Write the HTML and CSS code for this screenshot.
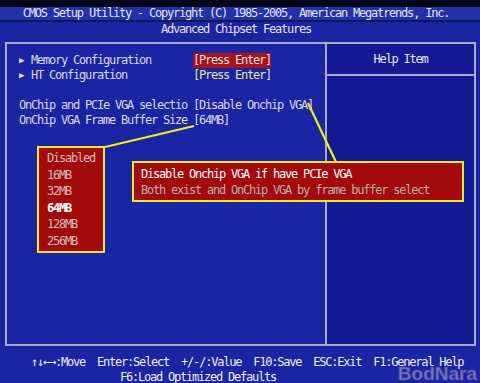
FILE: index.html
```html
<!DOCTYPE html>
<html lang="en">
<head>
    <meta charset="UTF-8">
    <meta name="viewport" content="width=device-width, initial-scale=1.0">
    <title>Advanced Chipset Features</title>
    <link rel="stylesheet" href="styles.css">
</head>
<body>
    <div class="screen">
        <div class="title-bar">CMOS Setup Utility - Copyright (C) 1985-2005, American Megatrends, Inc.</div>
        <div class="subtitle">Advanced Chipset Features</div>

        <div class="frame">
            <div class="items">
                <div class="row">
                    <span class="label"><span class="arrow">&#9654;</span>Memory Configuration</span>
                    <span class="value selected">[Press Enter]</span>
                </div>
                <div class="row">
                    <span class="label"><span class="arrow">&#9654;</span>HT Configuration</span>
                    <span class="value submenu">[Press Enter]</span>
                </div>
                <div class="row blank"></div>
                <div class="row">
                    <span class="label">OnChip and PCIe VGA selectio</span>
                    <span class="value">[Disable Onchip VGA]</span>
                </div>
                <div class="row">
                    <span class="label">OnChip VGA Frame Buffer Size</span>
                    <span class="value">[64MB]</span>
                </div>
            </div>
            <div class="help">
                <div class="help-head">Help Item</div>
            </div>
        </div>

        <div class="footer">
            <div class="keys">&#8593;&#8595;&#8592;&#8594;:Move  Enter:Select  +/-/:Value  F10:Save  ESC:Exit  F1:General Help</div>
            <div class="keys second">F6:Load Optimized Defaults</div>
        </div>

        <!-- callout lines drawn over the screen -->
        <svg class="callouts" width="480" height="383" viewBox="0 0 480 383">
            <line x1="194" y1="126" x2="105" y2="147" />
            <line x1="308" y1="103" x2="336" y2="162" />
        </svg>

        <div class="choices">
            <div>Disabled</div>
            <div>16MB</div>
            <div>32MB</div>
            <div class="current">64MB</div>
            <div>128MB</div>
            <div>256MB</div>
        </div>

        <div class="note">
            <div class="note-main">Disable Onchip VGA if have PCIe VGA</div>
            <div class="note-sub">Both exist and OnChip VGA by frame buffer select</div>
        </div>

        <div class="watermark">BodNara</div>
    </div>
</body>
</html>
```

FILE: styles.css
```css
html,
body {
    margin: 0;
    padding: 0;
    background: #1b24a3;
}

.screen {
    position: relative;
    width: 480px;
    height: 383px;
    overflow: hidden;
    font-family: "DejaVu Sans Mono", monospace;
    font-size: 12px;
    letter-spacing: -1.22px;
    color: #d8d8e6;
}

.title-bar {
    height: 13px;
    line-height: 13px;
    border-top: 7px solid #07071c;
    border-bottom: 2px solid #10175e;
    background: #2331a6;
    color: #e4e4ee;
    text-align: center;
    padding-right: 8px;
}

.subtitle {
    height: 20px;
    line-height: 14px;
    text-align: center;
    padding-right: 8px;
    color: #e2e2ec;
}

.frame {
    display: flex;
    box-sizing: border-box;
    width: 471px;
    height: 304px;
    margin-left: 5px;
    border: 2px solid #a9aacb;
}

.items {
    width: 318px;
    padding: 9px 0 0 12px;
    box-sizing: border-box;
}

.row {
    display: flex;
    height: 15px;
    line-height: 15px;
    white-space: nowrap;
}

.label {
    width: 174px;
    flex: none;
}

.arrow {
    display: inline-block;
    width: 12px;
    font-size: 9px;
    vertical-align: top;
}

.value.selected {
    background: #a3141c;
    color: #f4dede;
}

.value.submenu {
    color: #e8e494;
}

.help {
    flex: 1;
    border-left: 2px solid #a9aacb;
    background: #131a94;
}

.help-head {
    height: 30px;
    line-height: 30px;
    border-bottom: 2px solid #a9aacb;
    text-align: center;
    color: #e6e6f0;
}

.footer {
    padding-top: 9px;
    color: #ececf4;
}

.keys {
    height: 15px;
    line-height: 15px;
    padding-left: 31px;
    white-space: pre;
}

.keys.second {
    padding-left: 120px;
}

.callouts {
    position: absolute;
    left: 0;
    top: 0;
}

.callouts line {
    stroke: #f2ee1e;
    stroke-width: 2.2;
}

.choices {
    position: absolute;
    left: 37px;
    top: 146px;
    width: 68px;
    height: 107px;
    box-sizing: border-box;
    border: 2px solid #ecea2a;
    background: #a30a0c;
    padding: 2px 0 0 8px;
    line-height: 16.6px;
    color: #cdbcbc;
}

.choices .current {
    color: #ffffff;
    font-weight: bold;
}

.note {
    position: absolute;
    left: 132px;
    top: 161px;
    width: 332px;
    height: 41px;
    box-sizing: border-box;
    border: 2px solid #ecea2a;
    background: #a30a0c;
    padding: 3px 0 0 7px;
    line-height: 16px;
    white-space: nowrap;
}

.note-main {
    color: #ffffff;
}

.note-sub {
    color: #bfaaaa;
}

.watermark {
    position: absolute;
    right: 3px;
    bottom: 0;
    line-height: 18px;
    font-family: "Liberation Sans", sans-serif;
    font-weight: bold;
    font-size: 19px;
    letter-spacing: 0;
    color: rgba(196, 196, 240, 0.55);
    -webkit-text-stroke: 1px rgba(70, 70, 140, 0.7);
}
```
